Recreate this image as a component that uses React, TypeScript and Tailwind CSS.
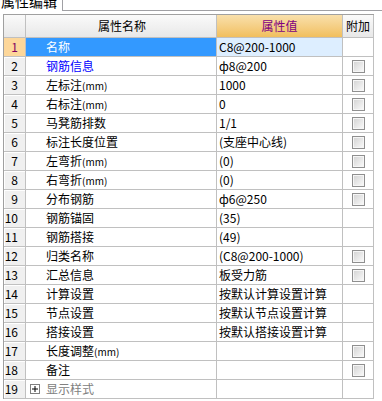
import React from "react";

type Row = {
  n: number;
  name: string;
  unit?: boolean;
  value: string;
  check?: boolean;
  selected?: boolean;
  blue?: boolean;
  group?: boolean;
};

const rows: Row[] = [
  { n: 1, name: "名称", value: "C8@200-1000", selected: true },
  { n: 2, name: "钢筋信息", value: "ф8@200", check: true, blue: true },
  { n: 3, name: "左标注", unit: true, value: "1000", check: true },
  { n: 4, name: "右标注", unit: true, value: "0", check: true },
  { n: 5, name: "马凳筋排数", value: "1/1", check: true },
  { n: 6, name: "标注长度位置", value: "(支座中心线)", check: true },
  { n: 7, name: "左弯折", unit: true, value: "(0)", check: true },
  { n: 8, name: "右弯折", unit: true, value: "(0)", check: true },
  { n: 9, name: "分布钢筋", value: "ф6@250", check: true },
  { n: 10, name: "钢筋锚固", value: "(35)" },
  { n: 11, name: "钢筋搭接", value: "(49)" },
  { n: 12, name: "归类名称", value: "(C8@200-1000)", check: true },
  { n: 13, name: "汇总信息", value: "板受力筋", check: true },
  { n: 14, name: "计算设置", value: "按默认计算设置计算" },
  { n: 15, name: "节点设置", value: "按默认节点设置计算" },
  { n: 16, name: "搭接设置", value: "按默认搭接设置计算" },
  { n: 17, name: "长度调整", unit: true, value: "", check: true },
  { n: 18, name: "备注", value: "", check: true },
  { n: 19, name: "显示样式", value: "", group: true },
];

const Checkbox = () => (
  <span className="block w-[13px] h-[13px] border border-[#8f8f8f] bg-linear-to-br from-[#d2d2d2] to-[#fbfbfb] shadow-[inset_0_0_0_1px_#f6f6f6]" />
);

const PlusBox = () => (
  <span className="flex items-center justify-center w-[10px] h-[10px] border border-[#7f7f7f] bg-white">
    <svg width="8" height="8" viewBox="0 0 8 8">
      <path d="M1 4h6M4 1v6" stroke="#000" strokeWidth="1" />
    </svg>
  </span>
);

const App = () => {
  return (
    <div
      className="w-[382px] h-[401px] bg-white overflow-hidden text-[12px] text-black"
      style={{ fontFamily: '"Noto Sans CJK SC", "Noto Sans", sans-serif' }}
    >
      {/* tab strip */}
      <div className="flex h-[11px] overflow-hidden">
        <div className="w-[62px] overflow-hidden">
          <div className="mt-[-8px] pl-[1px] text-[14px] leading-[18px] whitespace-nowrap">属性编辑</div>
        </div>
        <div className="flex-1 border-l border-b border-[#a0a0a4]" />
      </div>

      {/* property grid */}
      <div className="mt-[3px] ml-[3px] w-[371px] border-l border-t border-[#a0a0a0]">
        <div className="flex h-[23px] border-b border-[#c0c0c0]">
          <div className="w-[22px] border-r border-[#c0c0c0] bg-linear-to-b from-[#fafafa] to-[#e8e8e8]" />
          <div className="w-[191px] border-r border-[#c0c0c0] bg-linear-to-b from-[#fafafa] to-[#e8e8e8] flex items-center justify-center pl-[2px]">
            属性名称
          </div>
          <div className="w-[126px] border-r border-[#c0c0c0] bg-linear-to-b from-[#f9e0ab] to-[#f1bf5d] flex items-center justify-center text-[#800080]">
            属性值
          </div>
          <div className="w-[31px] border-r border-[#c0c0c0] bg-linear-to-b from-[#fafafa] to-[#e8e8e8] flex items-center justify-center">
            附加
          </div>
        </div>

        {rows.map((r) => (
          <div key={r.n} className="flex h-[19px] border-b border-[#c0c0c0] leading-[18px]">
            <div
              className={
                r.selected
                  ? "w-[22px] border-r border-[#c0c0c0] bg-[#fdd79a] text-[#800060] text-right pr-[7px]"
                  : "w-[22px] border-r border-[#c0c0c0] bg-[#f0f0f0] shadow-[inset_1px_1px_0_#ffffff] text-right pr-[7px]"
              }
            >
              {r.n}
            </div>
            <div
              className={
                r.selected
                  ? "w-[191px] border-r border-[#c0c0c0] bg-[#3399ff] text-white pl-[20px]"
                  : r.blue
                  ? "w-[191px] border-r border-[#c0c0c0] text-[#0000ff] pl-[20px]"
                  : r.group
                  ? "w-[191px] border-r border-[#c0c0c0] text-[#808080] pl-[4px] flex items-center gap-[6px]"
                  : "w-[191px] border-r border-[#c0c0c0] pl-[20px]"
              }
            >
              {r.group && <PlusBox />}
              {r.name}
              {r.unit && <span className="text-[10px]">(mm)</span>}
            </div>
            <div
              className={
                r.selected
                  ? "w-[126px] border-r border-[#c0c0c0] bg-[#ddeeff] pl-[2px] whitespace-nowrap"
                  : "w-[126px] border-r border-[#c0c0c0] pl-[2px] whitespace-nowrap"
              }
            >
              {r.value}
            </div>
            <div className="w-[31px] border-r border-[#c0c0c0] flex items-center justify-center">
              {r.check && <Checkbox />}
            </div>
          </div>
        ))}
      </div>
    </div>
  );
};

export default App;
